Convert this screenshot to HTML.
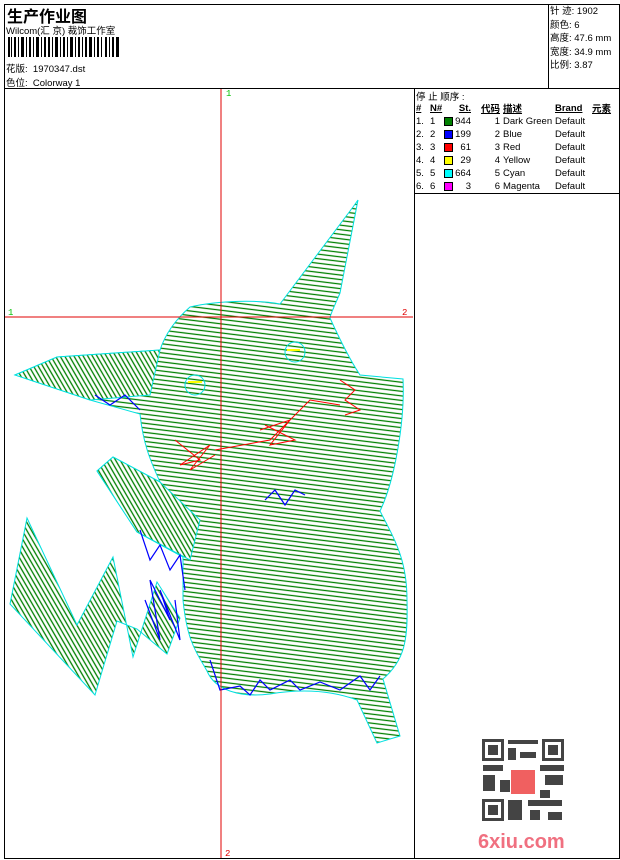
<!DOCTYPE html>
<html><head><meta charset="utf-8"><style>
*{margin:0;padding:0;box-sizing:border-box}
body{width:620px;height:860px;background:#fff;position:relative;font-family:"Liberation Sans","Noto Sans CJK SC",sans-serif;font-size:10px;color:#000;overflow:hidden}
.a{position:absolute;white-space:nowrap}
.bc{position:absolute;left:8px;top:37px;height:20px;display:flex}
.bc i{display:block;height:20px}
table{border-collapse:collapse}
td{padding:0;height:13px;font-size:9.5px;white-space:nowrap}
.sw{display:inline-block;width:9px;height:9px;border:1px solid #000;vertical-align:middle}
</style></head><body>
<div class="a" style="left:4px;top:4px;width:616px;height:855px;border:1px solid #000"></div>
<div class="a" style="left:4px;top:88px;width:616px;border-top:1px solid #000"></div>
<div class="a" style="left:548px;top:4px;height:84px;border-left:1px solid #000"></div>
<div class="a" style="left:414px;top:88px;height:771px;border-left:1px solid #000"></div>
<div class="a" style="left:414px;top:193px;width:206px;border-top:1px solid #000"></div>

<div class="a" style="left:7px;top:3px;font-size:16px;font-weight:bold">生产作业图</div>
<div class="a" style="left:6px;top:23px;font-size:9.5px">Wilcom(汇 京) 裁饰工作室</div>
<div class="bc">
<i style="width:2px;background:#000"></i><i style="width:1px"></i><i style="width:1px;background:#000"></i><i style="width:2px"></i><i style="width:2px;background:#000"></i><i style="width:2px"></i><i style="width:1px;background:#000"></i><i style="width:2px"></i><i style="width:3px;background:#000"></i><i style="width:2px"></i><i style="width:1px;background:#000"></i><i style="width:2px"></i><i style="width:2px;background:#000"></i><i style="width:2px"></i><i style="width:1px;background:#000"></i><i style="width:2px"></i><i style="width:3px;background:#000"></i><i style="width:2px"></i><i style="width:1px;background:#000"></i><i style="width:2px"></i><i style="width:2px;background:#000"></i><i style="width:2px"></i><i style="width:2px;background:#000"></i><i style="width:2px"></i><i style="width:1px;background:#000"></i><i style="width:2px"></i><i style="width:3px;background:#000"></i><i style="width:2px"></i><i style="width:1px;background:#000"></i><i style="width:2px"></i><i style="width:2px;background:#000"></i><i style="width:2px"></i><i style="width:1px;background:#000"></i><i style="width:2px"></i><i style="width:3px;background:#000"></i><i style="width:2px"></i><i style="width:1px;background:#000"></i><i style="width:2px"></i><i style="width:2px;background:#000"></i><i style="width:2px"></i><i style="width:1px;background:#000"></i><i style="width:2px"></i><i style="width:2px;background:#000"></i><i style="width:2px"></i><i style="width:3px;background:#000"></i><i style="width:2px"></i><i style="width:1px;background:#000"></i><i style="width:2px"></i><i style="width:2px;background:#000"></i><i style="width:2px"></i><i style="width:1px;background:#000"></i><i style="width:3px"></i><i style="width:2px;background:#000"></i><i style="width:2px"></i><i style="width:1px;background:#000"></i><i style="width:2px"></i><i style="width:2px;background:#000"></i><i style="width:2px"></i><i style="width:3px;background:#000"></i>
</div>
<div class="a" style="left:6px;top:61px;font-size:9.5px">花版:&nbsp; 1970347.dst</div>
<div class="a" style="left:6px;top:75px;font-size:9.5px">色位:&nbsp; Colorway 1</div>

<div class="a" style="left:550px;top:5px;font-size:9.5px;line-height:13.5px">针 迹: 1902<br>颜色: 6<br>高度: 47.6 mm<br>宽度: 34.9 mm<br>比例: 3.87</div>

<div class="a" style="left:416px;top:89px;font-size:9.5px">停 止 顺序 :</div>
<table class="a" style="left:416px;top:101px;table-layout:fixed">
<colgroup><col style="width:14px"><col style="width:14px"><col style="width:11px"><col style="width:16px"><col style="width:29px"><col style="width:55px"><col style="width:35px"><col style="width:28px"></colgroup>
<tr style="font-weight:bold;text-decoration:underline"><td>#</td><td>N#</td><td></td><td style="text-align:right">St.</td><td style="text-align:right">代码</td><td style="padding-left:3px">描述</td><td>Brand</td><td style="padding-left:2px">元素</td></tr>
<tr><td>1.</td><td>1</td><td><span class="sw" style="background:#008000"></span></td><td style="text-align:right">944</td><td style="text-align:right">1</td><td style="padding-left:3px">Dark Green</td><td>Default</td><td></td></tr>
<tr><td>2.</td><td>2</td><td><span class="sw" style="background:#0000ff"></span></td><td style="text-align:right">199</td><td style="text-align:right">2</td><td style="padding-left:3px">Blue</td><td>Default</td><td></td></tr>
<tr><td>3.</td><td>3</td><td><span class="sw" style="background:#ff0000"></span></td><td style="text-align:right">61</td><td style="text-align:right">3</td><td style="padding-left:3px">Red</td><td>Default</td><td></td></tr>
<tr><td>4.</td><td>4</td><td><span class="sw" style="background:#ffff00"></span></td><td style="text-align:right">29</td><td style="text-align:right">4</td><td style="padding-left:3px">Yellow</td><td>Default</td><td></td></tr>
<tr><td>5.</td><td>5</td><td><span class="sw" style="background:#00ffff"></span></td><td style="text-align:right">664</td><td style="text-align:right">5</td><td style="padding-left:3px">Cyan</td><td>Default</td><td></td></tr>
<tr><td>6.</td><td>6</td><td><span class="sw" style="background:#ff00ff"></span></td><td style="text-align:right">3</td><td style="text-align:right">6</td><td style="padding-left:3px">Magenta</td><td>Default</td><td></td></tr>
</table>

<svg class="a" style="left:0;top:0" width="620" height="860">
<defs>
<pattern id="h" patternUnits="userSpaceOnUse" width="40" height="4.5" patternTransform="rotate(7)">
<rect width="40" height="4.5" fill="#fff"/><line x1="0" y1="2" x2="40" y2="2" stroke="#008000" stroke-width="1.3"/></pattern>
<pattern id="v" patternUnits="userSpaceOnUse" width="4" height="40" patternTransform="rotate(-30)">
<rect width="4" height="40" fill="#fff"/><line x1="2" y1="0" x2="2" y2="40" stroke="#008000" stroke-width="1.3"/></pattern>
</defs>
<g stroke="#00e0e0" stroke-width="1">
<path fill="url(#h)" d="M190,307 C220,300 260,300 280,304 L353,207 358,200 340,293 C335,305 330,315 330,318 C340,340 350,360 360,375 L403,379 C405,420 395,480 380,511 C395,540 407,560 407,600 C408,640 405,660 383,679 L400,736 377,743 357,700 C330,690 300,689 270,694 C240,698 215,690 207,671 C195,650 187,640 183,600 L183,557 137,532 97,471 113,457 160,482 C150,460 143,443 140,414 L90,400 15,375 57,357 160,350 C165,335 175,320 190,307 Z"/>
<polygon fill="url(#v)" points="10,604 27,518 77,625 113,557 133,657 157,582 180,618 167,654 137,629 117,621 95,695"/>
<polygon fill="url(#v)" points="57,357 160,350 150,395 90,400 15,375"/>
<polygon fill="url(#v)" points="97,471 113,457 160,482 200,520 190,560 137,532"/>
</g>
<g fill="none" stroke="#0000ff" stroke-width="1.2">
<polyline points="210,660 220,690 240,686 250,695 260,680 270,690 290,680 300,690 320,682 340,690 360,676 370,690 380,676"/>
<polyline points="145,600 160,640 150,580 170,620 160,590 180,640 175,600"/>
<polyline points="140,530 150,560 160,545 170,570 180,555 185,590"/>
<polyline points="265,500 275,490 285,505 295,490 305,495"/>
<polyline points="95,395 110,405 125,395 140,410"/>
</g>
<g fill="none" stroke="#ff0000" stroke-width="1">
<polyline points="175,440 200,460 180,465 210,445 190,470 215,455"/>
<polyline points="260,430 290,420 270,445 295,440 265,425"/>
<polyline points="340,380 355,390 345,400 360,410 345,415"/>
<polyline points="215,450 270,440 310,400 340,405"/>
</g>
<g fill="none" stroke="#00e0e0" stroke-width="1"><circle cx="195" cy="385" r="10"/><circle cx="295" cy="352" r="10"/></g>
<g fill="none" stroke="#ffff00" stroke-width="2"><line x1="188" y1="382" x2="202" y2="382"/><line x1="287" y1="350" x2="300" y2="350"/></g>
<line x1="221" y1="89" x2="221" y2="858" stroke="#e00000"/>
<line x1="5" y1="317" x2="413" y2="317" stroke="#e00000"/>
<text x="226" y="96" fill="#00c000" font-size="9" font-family="Liberation Mono">1</text>
<text x="8" y="315" fill="#00c000" font-size="9" font-family="Liberation Mono">1</text>
<text x="402" y="315" fill="#e00000" font-size="9" font-family="Liberation Mono">2</text>
<text x="225" y="856" fill="#e00000" font-size="9" font-family="Liberation Mono">2</text>
<g fill="#444">
<rect x="482" y="739" width="22" height="22"/><rect x="542" y="739" width="22" height="22"/><rect x="482" y="799" width="22" height="22"/>
</g>
<g fill="#fff"><rect x="485" y="742" width="16" height="16"/><rect x="545" y="742" width="16" height="16"/><rect x="485" y="802" width="16" height="16"/></g>
<g fill="#444"><rect x="488" y="745" width="10" height="10"/><rect x="548" y="745" width="10" height="10"/><rect x="488" y="805" width="10" height="10"/>
<rect x="508" y="740" width="30" height="4"/><rect x="508" y="748" width="8" height="12"/><rect x="520" y="752" width="16" height="6"/>
<rect x="483" y="765" width="20" height="6"/><rect x="483" y="775" width="12" height="16"/><rect x="500" y="780" width="10" height="12"/>
<rect x="540" y="765" width="24" height="6"/><rect x="545" y="775" width="18" height="10"/><rect x="540" y="790" width="10" height="8"/>
<rect x="508" y="800" width="14" height="20"/><rect x="528" y="800" width="34" height="6"/><rect x="530" y="810" width="10" height="10"/><rect x="548" y="812" width="14" height="8"/>
</g>
<rect x="511" y="770" width="24" height="24" fill="#f06060"/>
<text x="478" y="848" fill="#f07080" font-size="20" font-weight="bold" font-family="Liberation Sans">6xiu.com</text>
</svg>
</body></html>
